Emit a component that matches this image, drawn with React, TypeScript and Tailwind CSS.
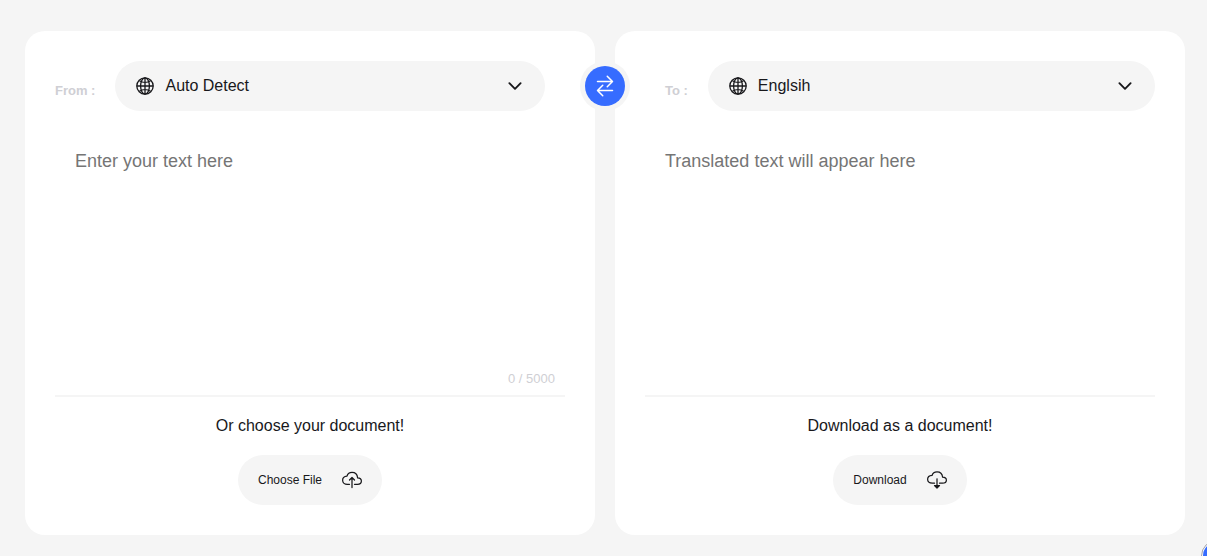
import { useRef, useState } from "react";
import type { ReactNode } from "react";
import { IoChevronDown, IoCloudUploadOutline, IoSwapHorizontalOutline } from "react-icons/io5";

const MAX_CHARS = 5000;

function GlobeIcon() {
  return (
    <svg viewBox="0 0 20 20" className="size-5" fill="none" stroke="currentColor" strokeWidth="1.3" aria-hidden>
      <circle cx="10" cy="10" r="8.2" />
      <ellipse cx="10" cy="10" rx="4.4" ry="8.2" />
      <path d="M10 1.8v16.4M1.8 10h16.4M4.4 4.8c3.2 2 8 2 11.2 0M4.4 15.2c3.2-2 8-2 11.2 0" />
    </svg>
  );
}

function CloudDownloadIcon() {
  return (
    <svg viewBox="0 0 512 512" className="size-5" fill="none" stroke="currentColor" strokeWidth="32" aria-hidden>
      <path
        strokeLinecap="round"
        strokeLinejoin="round"
        d="M320 336h76c55 0 100-21.21 100-75.6s-53-73.47-96-75.6C391.11 99.74 329 48 256 48c-69 0-113.44 45.79-128 91.2-60 5.7-112 35.88-112 98.4S70 336 136 336h56"
      />
      <path strokeLinecap="round" d="M256 224v180" />
      <path fill="currentColor" strokeLinejoin="round" d="M192 400h128l-64 60z" />
    </svg>
  );
}

function LanguageSelect({
  id,
  label,
  options,
}: {
  id: string;
  label: string;
  options: string[];
}) {
  return (
    <>
      <label htmlFor={id} className="pt-2.5 text-[13px] leading-5 font-bold text-[#cfcfd4]">
        {label}
      </label>
      <div className="grid h-[50px] flex-1 items-center rounded-full bg-[#f5f5f5]">
        <select
          id={id}
          className="col-start-1 row-start-1 h-full w-full cursor-pointer appearance-none rounded-full bg-transparent px-[50px] text-base text-[#18181b]"
        >
          {options.map((o) => (
            <option key={o}>{o}</option>
          ))}
        </select>
        <div className="pointer-events-none col-start-1 row-start-1 flex justify-between px-5">
          <GlobeIcon />
          <IoChevronDown size={20} aria-hidden />
        </div>
      </div>
    </>
  );
}

function DocumentBox({ title, children }: { title: string; children: ReactNode }) {
  return (
    <div className="flex flex-col items-center gap-4 pt-4">
      <p className="text-base leading-[26px]">{title}</p>
      {children}
    </div>
  );
}

export default function App() {
  const [text, setText] = useState("");
  const fileInput = useRef<HTMLInputElement>(null);

  return (
    <div className="min-h-screen overflow-hidden bg-[#f5f5f5] pt-[31px] pr-[22px] pb-[21px] pl-[25px] font-['Liberation_Sans',Arial,sans-serif] text-[#18181b]">
      <main className="relative grid grid-cols-2 gap-5">
        <section className="rounded-[20px] bg-white p-[30px]">
          <div className="flex items-center gap-5 pr-5">
            <LanguageSelect id="source" label="From :" options={["Auto Detect", "English", "French"]} />
          </div>
          <div className="mt-5 border-b-2 border-[#f5f5f5] pb-2">
            <textarea
              aria-label="Text to translate"
              placeholder="Enter your text here"
              maxLength={MAX_CHARS}
              value={text}
              onChange={(e) => setText(e.target.value)}
              className="block h-60 w-full resize-none px-5 pt-[18px] text-lg leading-6 outline-none placeholder:text-[#757575]"
            />
            <p className="pr-2.5 text-right text-[13px] leading-4 text-[#cfcfd4]">
              {text.length} / {MAX_CHARS}
            </p>
          </div>
          <DocumentBox title="Or choose your document!">
            <button
              type="button"
              onClick={() => fileInput.current?.click()}
              className="flex h-[50px] cursor-pointer items-center gap-5 rounded-full bg-[#f5f5f5] px-5 text-xs"
            >
              Choose File
              <IoCloudUploadOutline size={20} aria-hidden />
            </button>
            <input ref={fileInput} type="file" aria-label="Document" className="hidden" />
          </DocumentBox>
        </section>

        <button
          type="button"
          aria-label="Swap languages"
          className="absolute top-[30px] left-1/2 flex size-[50px] -translate-x-1/2 cursor-pointer items-center justify-center rounded-full bg-[#f5f5f5]"
        >
          <span className="flex size-10 items-center justify-center rounded-full bg-[#366cff] text-white">
            <IoSwapHorizontalOutline size={24} aria-hidden />
          </span>
        </button>

        <section className="rounded-[20px] bg-white p-[30px]">
          <div className="flex items-center gap-5 pl-5">
            <LanguageSelect id="target" label="To :" options={["Englsih", "French", "German"]} />
          </div>
          <div className="mt-5 border-b-2 border-[#f5f5f5]">
            <textarea
              aria-label="Translation"
              placeholder="Translated text will appear here"
              readOnly
              className="block h-[264px] w-full resize-none px-5 pt-[18px] text-lg leading-6 outline-none placeholder:text-[#757575]"
            />
          </div>
          <DocumentBox title="Download as a document!">
            <button
              type="button"
              className="flex h-[50px] cursor-pointer items-center gap-5 rounded-full bg-[#f5f5f5] px-5 text-xs"
            >
              Download
              <CloudDownloadIcon />
            </button>
          </DocumentBox>
        </section>
      </main>

      <button
        type="button"
        aria-label="Toggle theme"
        className="fixed -right-11 -bottom-4 h-8 w-[50px] cursor-pointer rounded-full border border-[#a0a0a8] bg-white p-px"
      >
        <span className="block size-7 rounded-full bg-[#366cff]" />
      </button>
    </div>
  );
}
